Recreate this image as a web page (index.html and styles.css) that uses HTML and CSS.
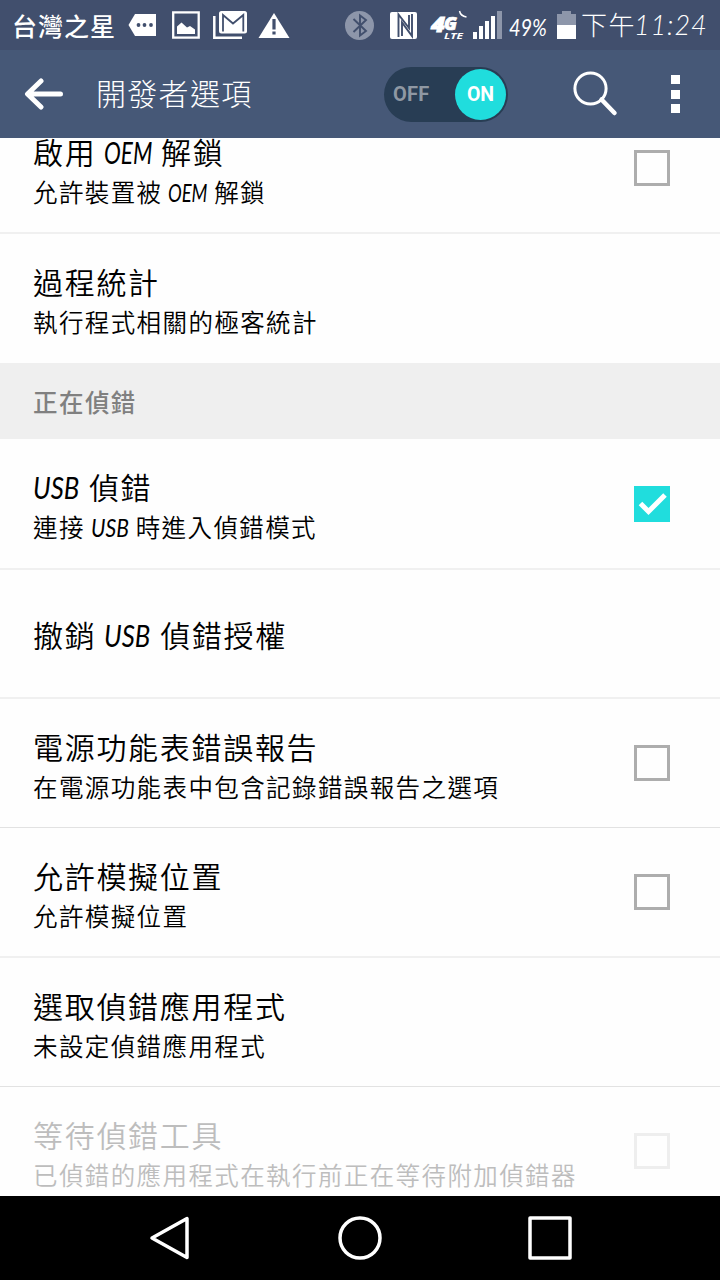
FILE: index.html
```html
<!DOCTYPE html>
<html lang="zh-Hant">
<head>
<meta charset="utf-8">
<title>開發者選項</title>
<link rel="stylesheet" href="styles.css">
</head>
<body>
<div class="screen">
  <header class="status">
    <span class="carrier">台灣之星</span>
    <svg class="notices" width="165" height="50" viewBox="0 0 165 50">
      <path fill="#fff" d="M9 14H30V36H9L2.500 25z"/>
      <g fill="#414f6d"><circle cx="12.500" cy="25" r="1.900"/><circle cx="18.500" cy="25" r="1.900"/><circle cx="25" cy="25" r="1.900"/></g>
      <rect x="47.200" y="12.400" width="25.500" height="25.200" fill="none" stroke="#fff" stroke-width="2.300"/>
      <path fill="#fff" d="M51 34v-7.500l4.500-4 5.500 5 3-1.500 5 3.500V34z"/>
      <path fill="none" stroke="#fff" stroke-width="2.500" d="M88.300 16v21.800H116"/>
      <rect x="93" y="11" width="28" height="22.500" rx="2.500" fill="#fff"/>
      <path fill="none" stroke="#414f6d" stroke-width="1.800" d="M97 31.500V15l10 8.500L117.300 15v16.500"/>
      <path fill="#fff" d="M148 13L163.500 38H132.500z"/>
      <path stroke="#414f6d" stroke-width="3.200" d="M148 19v10.500m0 2v3"/>
    </svg>
    <svg class="radios" width="164" height="50" viewBox="0 0 164 50">
      <circle cx="14.500" cy="25.500" r="14.500" fill="#8d96aa"/>
      <path fill="none" stroke="#414f6d" stroke-width="1.900" d="M8.500 19l12.500 12-6 4.500v-20l6 4.500L8.500 32"/>
      <rect x="45" y="12" width="27" height="27" rx="2" fill="#fff"/>
      <path fill="none" stroke="#414f6d" stroke-width="1.900" d="M53.500 37V14.500L64 28V15"/>
      <path fill="none" stroke="#414f6d" stroke-width="1.900" d="M57 36V22.500L67 36V14"/>
      <g fill="#fff" font-family="Open Sans, sans-serif" font-style="italic" font-weight="800">
        <text x="86" y="32" font-size="21" textLength="14" lengthAdjust="spacingAndGlyphs" stroke="#fff">4</text>
        <text x="99" y="30" font-size="17" textLength="13" lengthAdjust="spacingAndGlyphs" stroke="#fff" stroke-width=".7">G</text>
        <text x="99" y="39" font-size="9.500" font-weight="700" textLength="19" lengthAdjust="spacingAndGlyphs">LTE</text>
      </g>
      <path fill="none" stroke="#fff" stroke-width="1.500" d="M114.500 11q1 5 7 6"/>
      <path fill="#fff" d="M128 32h4v7h-4zm6-6h4v13h-4zm6-5h4v18h-4zm6-5h4v23h-4z"/>
      <path fill="#8d96aa" d="M152 11h5v28h-5z"/>
    </svg>
    <span class="battery-level"><span>49%</span></span>
    <svg class="battery" width="20" height="50" viewBox="0 0 20 50">
      <path fill="#8d96aa" d="M5 11h9v3h5v11H0V14h5z"/>
      <path fill="#fff" d="M0 25h19v14H0z"/>
    </svg>
    <span class="clock">下午</span><span class="clock-time"><span>11:24</span></span>
  </header>

  <nav class="toolbar">
    <svg class="back" width="40" height="34" viewBox="0 0 40 34">
      <path d="M17 4L3.500 17 17 30M4.500 17h32" fill="none" stroke="#fff" stroke-width="5" stroke-linecap="round" stroke-linejoin="round"/>
    </svg>
    <h1 class="heading">開發者選項</h1>
    <div class="switch"><span class="off">OFF</span><span class="on">ON</span></div>
    <svg class="search" width="46" height="46" viewBox="0 0 46 46">
      <circle cx="17.500" cy="17.500" r="15.600" fill="none" stroke="#fff" stroke-width="3"/>
      <path d="M28.500 28.500L41.500 42" stroke="#fff" stroke-width="4.500" stroke-linecap="round"/>
    </svg>
    <div class="more"><i></i><i></i><i></i></div>
  </nav>

  <main class="list">
    <div class="row first">
      <div class="text">
        <div class="title">啟用 <span class="latin oem"><span>OEM</span></span> 解鎖</div>
        <div class="summary">允許裝置被 <span class="latin oem"><span>OEM</span></span> 解鎖</div>
      </div>
      <span class="check"></span>
    </div>
    <div class="row plain">
      <div class="text">
        <div class="title">過程統計</div>
        <div class="summary">執行程式相關的極客統計</div>
      </div>
    </div>
    <h2 class="section">正在偵錯</h2>
    <div class="row tall">
      <div class="text">
        <div class="title"><span class="latin usb"><span>USB</span></span> 偵錯</div>
        <div class="summary">連接 <span class="latin usb"><span>USB</span></span> 時進入偵錯模式</div>
      </div>
      <span class="check checked">
        <svg width="36" height="36" viewBox="0 0 36 36"><path d="M6.500 17.500l8 8L31 9" fill="none" stroke="#fff" stroke-width="5"/></svg>
      </span>
    </div>
    <div class="row single">
      <div class="text"><div class="title">撤銷 <span class="latin usb"><span>USB</span></span> 偵錯授權</div></div>
    </div>
    <div class="row thin">
      <div class="text">
        <div class="title">電源功能表錯誤報告</div>
        <div class="summary">在電源功能表中包含記錄錯誤報告之選項</div>
      </div>
      <span class="check"></span>
    </div>
    <div class="row">
      <div class="text">
        <div class="title">允許模擬位置</div>
        <div class="summary">允許模擬位置</div>
      </div>
      <span class="check"></span>
    </div>
    <div class="row thin">
      <div class="text">
        <div class="title">選取偵錯應用程式</div>
        <div class="summary">未設定偵錯應用程式</div>
      </div>
    </div>
    <div class="row disabled">
      <div class="text">
        <div class="title">等待偵錯工具</div>
        <div class="summary">已偵錯的應用程式在執行前正在等待附加偵錯器</div>
      </div>
      <span class="check"></span>
    </div>
  </main>

  <footer class="navbar">
    <svg width="44" height="46" viewBox="0 0 44 46"><path d="M4 23L39 3.500v39z"/></svg>
    <svg width="46" height="46" viewBox="0 0 46 46"><circle cx="23" cy="23" r="20"/></svg>
    <svg width="46" height="46" viewBox="0 0 46 46"><path d="M3 3h40v40H3z"/></svg>
  </footer>
</div>
</body>
</html>
```

FILE: styles.css
```css
* { box-sizing: border-box; }

body {
  margin: 0;
  font-family: "Noto Sans CJK TC", sans-serif;
  font-weight: 350;
}

svg { display: block; flex: none; }

.screen {
  width: 720px;
  height: 1280px;
  display: flex;
  flex-direction: column;
  overflow: hidden;
  background: #fefefe;
}

.status {
  flex: none;
  height: 50px;
  display: flex;
  align-items: center;
  padding-left: 12px;
  background: #414f6d;
  color: #fff;
  white-space: nowrap;
}

.carrier {
  width: 114px;
  margin-top: -1px;
  font-size: 25px;
  letter-spacing: 1px;
  font-weight: 500;
}

.radios { margin-left: 54px; }

.battery-level, .clock-time {
  font-family: Lato, sans-serif;
  font-style: italic;
  font-weight: 400;
}

.battery-level { width: 48px; margin-top: 2px; }

.battery-level span, .clock-time span {
  display: inline-block;
  transform-origin: left center;
}

.battery-level span { font-size: 24px; transform: scaleX(.83); }

.clock {
  width: 53px;
  margin: -3px 0 0 4px;
  font-size: 26px;
  font-weight: 300;
  letter-spacing: 1.5px;
}

.clock-time { font-weight: 300; }
.clock-time span { font-size: 28px; letter-spacing: 1px; transform: scaleX(.96); margin-top: -3px; }

.toolbar {
  flex: none;
  height: 88px;
  display: flex;
  align-items: center;
  padding-left: 24px;
  background: #465877;
}

.heading {
  width: 288px;
  margin: -4px 0 0 32px;
  font-size: 30px;
  font-weight: 300;
  letter-spacing: 1.3px;
  line-height: 40px;
  color: #fff;
}

.switch {
  width: 124px;
  height: 55px;
  display: flex;
  align-items: center;
  justify-content: space-between;
  padding: 0 2px 0 9px;
  border-radius: 28px;
  background: #283d54;
  font-family: Roboto, sans-serif;
  font-weight: 700;
  font-size: 20px;
}

.off { color: #8f98a3; letter-spacing: .3px; }

.on {
  width: 51px;
  height: 51px;
  border-radius: 50%;
  background: #20dddd;
  color: #fff;
  line-height: 51px;
  text-align: center;
  font-size: 19.500px;
}

.search { margin-left: 65px; }

.more {
  display: grid;
  gap: 5.500px;
  margin-left: 52px;
}

.more i {
  width: 9px;
  height: 9px;
  background: #fff;
}

.list {
  flex: none;
  height: 1058px;
  overflow: hidden;
  color: #000;
}

.row {
  height: 130px;
  display: flex;
  align-items: center;
  justify-content: space-between;
  padding: 0 50px 0 33px;
  border-bottom: 2px solid #f0f0f0;
  white-space: nowrap;
}

.first { margin-top: -34px; }
.plain { height: 129px; border-bottom: 0; }
.tall { height: 131px; }
.single { height: 129px; }
.thin { height: 129px; border-bottom: 1px solid #e2e2e2; }

.text { padding-top: 5px; }
.single .text { padding-top: 0; }

.title {
  height: 40px;
  line-height: 40px;
  font-size: 30px;
  letter-spacing: 1.7px;
  word-spacing: -.5px;
}

.summary {
  height: 40px;
  line-height: 41px;
  font-size: 24.500px;
  letter-spacing: 1.4px;
  word-spacing: -1px;
}

.latin {
  display: inline-block;
  font-family: Lato, sans-serif;
  font-style: italic;
  font-weight: 400;
  letter-spacing: 0;
}

.latin span { display: inline-block; transform-origin: left center; transform: scaleX(.86); }
.usb { width: 1.6em; }
.oem { width: 1.63em; }
.oem span { transform: scaleX(.75); }

.section {
  height: 76px;
  margin: 0;
  padding: 0 33px;
  background: #efefef;
  color: #808080;
  font-size: 24.500px;
  font-weight: 500;
  letter-spacing: 1.45px;
  line-height: 77px;
}

.check {
  flex: none;
  width: 36px;
  height: 36px;
  border: 3px solid #adadad;
}

.checked { border: 0; background: #20dddd; }
.thin .check { margin-top: -1px; }

.disabled { height: 129px; border-bottom: 0; padding-bottom: 1px; color: #bdbdbd; }
.disabled .check { border-color: #eee; }

.navbar {
  flex: none;
  height: 84px;
  display: flex;
  justify-content: space-between;
  align-items: center;
  padding: 0 147px 0 148px;
  background: #000;
}

.navbar svg {
  fill: none;
  stroke: #fff;
  stroke-width: 3.500;
  stroke-linejoin: round;
}
```
